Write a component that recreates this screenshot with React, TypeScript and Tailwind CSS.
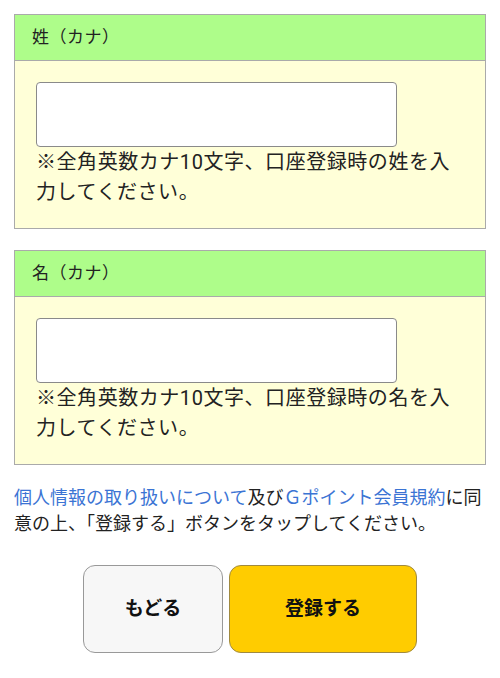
import React from "react";

function Field({ label, name }: { label: string; name: string }) {
  return (
    <div className="border border-[#aaaaaa]">
      <div className="h-[46px] bg-[#aefd8a] border-b border-[#aaaaaa] pl-[17px] flex items-center text-[17px] tracking-[0.5px] text-[#222]">
        {label}
      </div>
      <div className="bg-[#ffffd8] px-[21px] pt-[21px] pb-[21px]">
        <input
          type="text"
          className="block w-[361px] h-[65px] bg-white border border-[#8a8a8a] rounded-[4px] outline-none"
        />
        <p className="text-[20px] leading-[30px] tracking-[0.55px] text-[#222]">
          ※全角英数カナ10文字、口座登録時の{name}を入力してください。
        </p>
      </div>
    </div>
  );
}

export default function App() {
  return (
    <div
      className="w-[500px] min-h-[678px] bg-white px-[14px] pt-[14px]"
      style={{ fontFamily: "Roboto, 'Noto Sans CJK JP', sans-serif" }}
    >
      <div className="flex flex-col gap-[21px]">
        <Field label="姓（カナ）" name="姓" />
        <Field label="名（カナ）" name="名" />
      </div>
      <p className="mt-[20px] text-[18px] leading-[26px] text-[#222]">
        <span className="text-[#3b74d4]">個人情報の取り扱いについて</span>及び
        <span className="text-[#3b74d4]">Ｇポイント会員規約</span>に同意の上、「登録する」ボタンをタップしてください。
      </p>
      <div className="mt-[28px] flex justify-center gap-[6px]">
        <button className="w-[140px] h-[88px] rounded-[12px] border border-[#999] bg-[#f7f7f7] text-[19px] font-bold text-[#111]">
          もどる
        </button>
        <button className="w-[188px] h-[88px] rounded-[12px] border border-[#a08a40] bg-[#ffcc00] text-[19px] font-bold text-[#111]">
          登録する
        </button>
      </div>
    </div>
  );
}
